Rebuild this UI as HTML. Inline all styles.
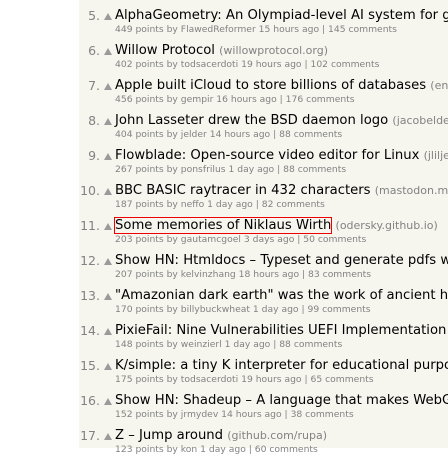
<!DOCTYPE html>
<html><head><meta charset="utf-8"><style>
html,body{margin:0;padding:0;width:448px;height:448px;overflow:hidden;background:#fff}
.bg{position:absolute;left:79px;top:0;width:369px;height:448px;background:#f6f6ef}
.row{position:absolute;left:0;width:448px;white-space:nowrap;font-family:"DejaVu Sans",Verdana,sans-serif}
.n{position:absolute;right:348px;top:0;font-size:12.5px;color:#828282;line-height:15px}
.a{position:absolute;left:104px;top:5px;width:0;height:0;border-left:4px solid transparent;border-right:4px solid transparent;border-bottom:7px solid #9a9a9a}
.t{position:absolute;left:115px;top:0;font-size:13.2px;color:#000;line-height:15px}
.d{font-size:11px;color:#828282}
.s{position:absolute;left:115px;top:17px;font-size:9.2px;color:#828282;line-height:10px}
.box{outline:1px solid #e00;outline-offset:0}
</style></head><body>
<div class="bg"></div>
<div class="row" style="top:8px"><span class="n">5.</span><span class="a"></span><span class="t">AlphaGeometry: An Olympiad-level AI system for geometry</span><span class="s">449 points by FlawedReformer 15 hours ago | 145 comments</span></div>
<div class="row" style="top:43px"><span class="n">6.</span><span class="a"></span><span class="t">Willow Protocol <span class="d">(willowprotocol.org)</span></span><span class="s">402 points by todsacerdoti 19 hours ago | 102 comments</span></div>
<div class="row" style="top:78px"><span class="n">7.</span><span class="a"></span><span class="t">Apple built iCloud to store billions of databases <span class="d">(engineering)</span></span><span class="s">456 points by gempir 16 hours ago | 176 comments</span></div>
<div class="row" style="top:113px"><span class="n">8.</span><span class="a"></span><span class="t">John Lasseter drew the BSD daemon logo <span class="d">(jacobelder.com)</span></span><span class="s">404 points by jelder 14 hours ago | 88 comments</span></div>
<div class="row" style="top:148px"><span class="n">9.</span><span class="a"></span><span class="t">Flowblade: Open-source video editor for Linux <span class="d">(jliljebl)</span></span><span class="s">267 points by ponsfrilus 1 day ago | 88 comments</span></div>
<div class="row" style="top:183px"><span class="n">10.</span><span class="a"></span><span class="t">BBC BASIC raytracer in 432 characters <span class="d">(mastodon.me)</span></span><span class="s">187 points by neffo 1 day ago | 82 comments</span></div>
<div class="row" style="top:218px"><span class="n">11.</span><span class="a"></span><span class="t"><span class="box">Some memories of Niklaus Wirth</span> <span class="d">(odersky.github.io)</span></span><span class="s">203 points by gautamcgoel 3 days ago | 50 comments</span></div>
<div class="row" style="top:253px"><span class="n">12.</span><span class="a"></span><span class="t">Show HN: Htmldocs – Typeset and generate pdfs with HTML</span><span class="s">207 points by kelvinzhang 18 hours ago | 83 comments</span></div>
<div class="row" style="top:288px"><span class="n">13.</span><span class="a"></span><span class="t">"Amazonian dark earth" was the work of ancient humans</span><span class="s">170 points by billybuckwheat 1 day ago | 99 comments</span></div>
<div class="row" style="top:323px"><span class="n">14.</span><span class="a"></span><span class="t">PixieFail: Nine Vulnerabilities UEFI Implementation</span><span class="s">148 points by weinzierl 1 day ago | 88 comments</span></div>
<div class="row" style="top:358px"><span class="n">15.</span><span class="a"></span><span class="t">K/simple: a tiny K interpreter for educational purposes</span><span class="s">175 points by todsacerdoti 19 hours ago | 65 comments</span></div>
<div class="row" style="top:393px"><span class="n">16.</span><span class="a"></span><span class="t">Show HN: Shadeup – A language that makes WebGPU easier</span><span class="s">152 points by jrmydev 14 hours ago | 38 comments</span></div>
<div class="row" style="top:428px"><span class="n">17.</span><span class="a"></span><span class="t">Z – Jump around <span class="d">(github.com/rupa)</span></span><span class="s">123 points by kon 1 day ago | 60 comments</span></div>
</body></html>
